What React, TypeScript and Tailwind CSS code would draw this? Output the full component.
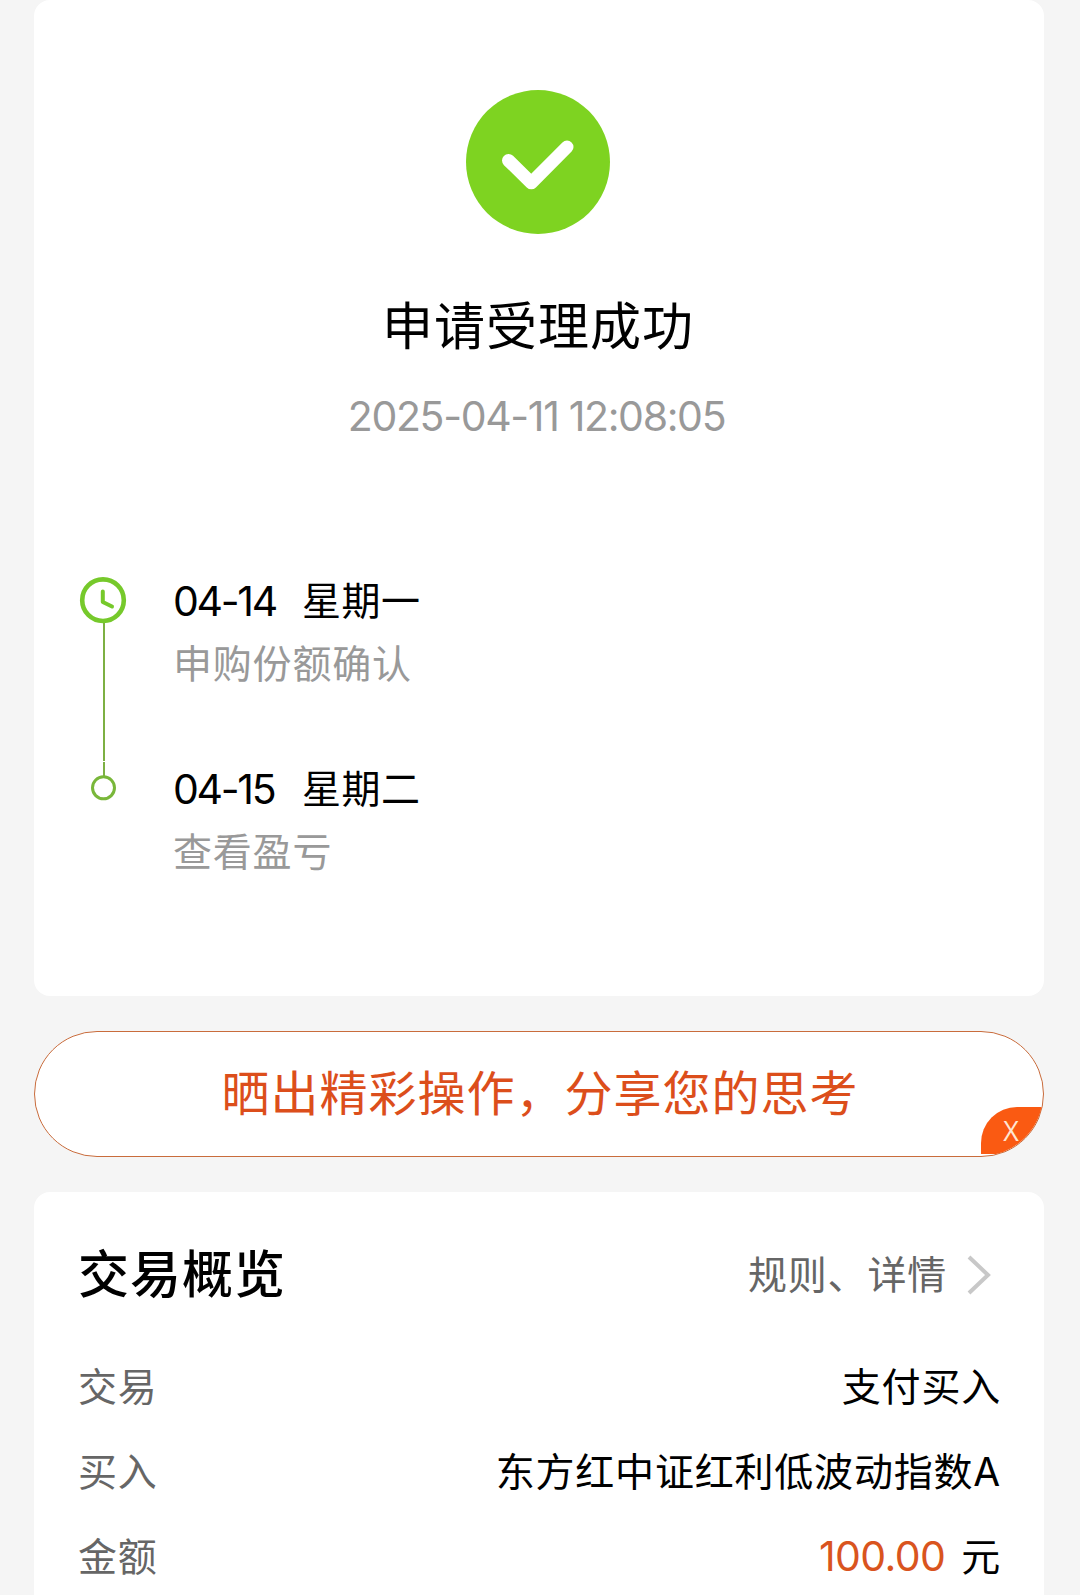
type Step = { date: string; day: string; note: string };

const steps: Step[] = [
  { date: "04-14", day: "星期一", note: "申购份额确认" },
  { date: "04-15", day: "星期二", note: "查看盈亏" },
];

export default function App() {
  return (
    <div className="w-[1080px] h-[1595px] overflow-hidden bg-[#f5f5f5] pl-[34px] pr-9 text-black font-['Inter','Noto_Sans_CJK_SC',sans-serif]">
      <ResultCard />
      <ShareBanner />
      <Overview />
    </div>
  );
}

function ResultCard() {
  return (
    <section className="h-[996px] rounded-2xl bg-white pt-[90px]">
      <div className="flex flex-col items-center pr-0.5">
        <svg viewBox="0 0 144 144" className="size-36">
          <circle cx="72" cy="72" r="72" fill="#7ed321" />
          <path
            d="M42.5 70.5 65.3 92.8 101 57"
            fill="none"
            stroke="#fff"
            strokeWidth="13"
            strokeLinecap="round"
            strokeLinejoin="round"
          />
        </svg>
        <h1 className="mt-[63px] text-[51px] leading-[60px] tracking-[1px]">申请受理成功</h1>
        <p className="mt-[34px] pr-[3px] text-[41px] leading-[50px] tracking-[-1.35px] text-[#999]">
          2025-04-11 12:08:05
        </p>
      </div>

      <div className="mt-[132px] flex pl-[45px]">
        <Rail />
        <ul className="ml-[46px]">
          {steps.map((s) => (
            <li key={s.date} className="h-[188px] pt-[3px]">
              <div className="flex gap-[26px] text-[39px] leading-[50px] whitespace-nowrap">
                <span className="w-[103px] text-[41px] tracking-[-2.3px]">{s.date}</span>
                <span className="tracking-[0.5px]">{s.day}</span>
              </div>
              <div className="mt-[13px] text-[39px] leading-[50px] tracking-[0.8px] text-[#999]">
                {s.note}
              </div>
            </li>
          ))}
        </ul>
      </div>
    </section>
  );
}

function Rail() {
  return (
    <svg viewBox="0 0 48 230" className="w-12 h-[230px] shrink-0" fill="none">
      <path d="M25 50V188M25 189V204" stroke="#7db043" strokeWidth="2" />
      <circle cx="24" cy="27.2" r="20.8" stroke="#76c92b" strokeWidth="4.6" />
      <path
        d="M23.8 18.5V29L33 33.5"
        stroke="#76c92b"
        strokeWidth="4"
        strokeLinecap="round"
        strokeLinejoin="round"
      />
      <circle cx="24.5" cy="214.8" r="11" stroke="#79b73a" strokeWidth="3" />
    </svg>
  );
}

function ShareBanner() {
  return (
    <div className="relative mt-[35px] flex h-[126px] items-center justify-center overflow-hidden rounded-full border border-[#c96c3c] bg-white">
      <span className="pl-0.5 text-[48px] leading-[60px] tracking-[1px] text-[#dc4e1b]">
        晒出精彩操作，分享您的思考
      </span>
      <button className="absolute right-0 bottom-[2px] flex h-[47px] w-[62px] items-center justify-center rounded-tl-[36px] bg-[#fa5a12] pr-0.5 font-['Open_Sans',sans-serif] text-[27px] leading-none text-[#ffe6d2]">
        X
      </button>
    </div>
  );
}

function Overview() {
  return (
    <section className="mt-[35px] h-[440px] rounded-t-2xl bg-white pt-[53px] pr-[44px] pl-11">
      <div className="flex h-[60px] items-center justify-between">
        <h2 className="text-[51px] font-medium leading-[60px] tracking-[1px]">交易概览</h2>
        <div className="flex items-center gap-[20px] pr-[9px] text-[39px] leading-[50px] tracking-[0.8px] text-[#666]">
          规则、详情
          <svg viewBox="0 0 24 40" className="h-10 w-6" fill="none">
            <path d="M2 2 21 20 2 38" stroke="#c8c8c8" strokeWidth="4" />
          </svg>
        </div>
      </div>
      <dl className="mt-[39px]">
        <Row label="交易">支付买入</Row>
        <Row label="买入">东方红中证红利低波动指数A</Row>
        <Row label="金额">
          <span className="mr-4 text-[41px] tracking-[-0.6px] text-[#d9541e]">100.00</span>元
        </Row>
      </dl>
    </section>
  );
}

function Row({ label, children }: { label: string; children: React.ReactNode }) {
  return (
    <div className="flex h-[85px] items-center justify-between text-[39px] leading-[50px] tracking-[0.8px]">
      <dt className="text-[#666]">{label}</dt>
      <dd className="-mr-px">{children}</dd>
    </div>
  );
}
